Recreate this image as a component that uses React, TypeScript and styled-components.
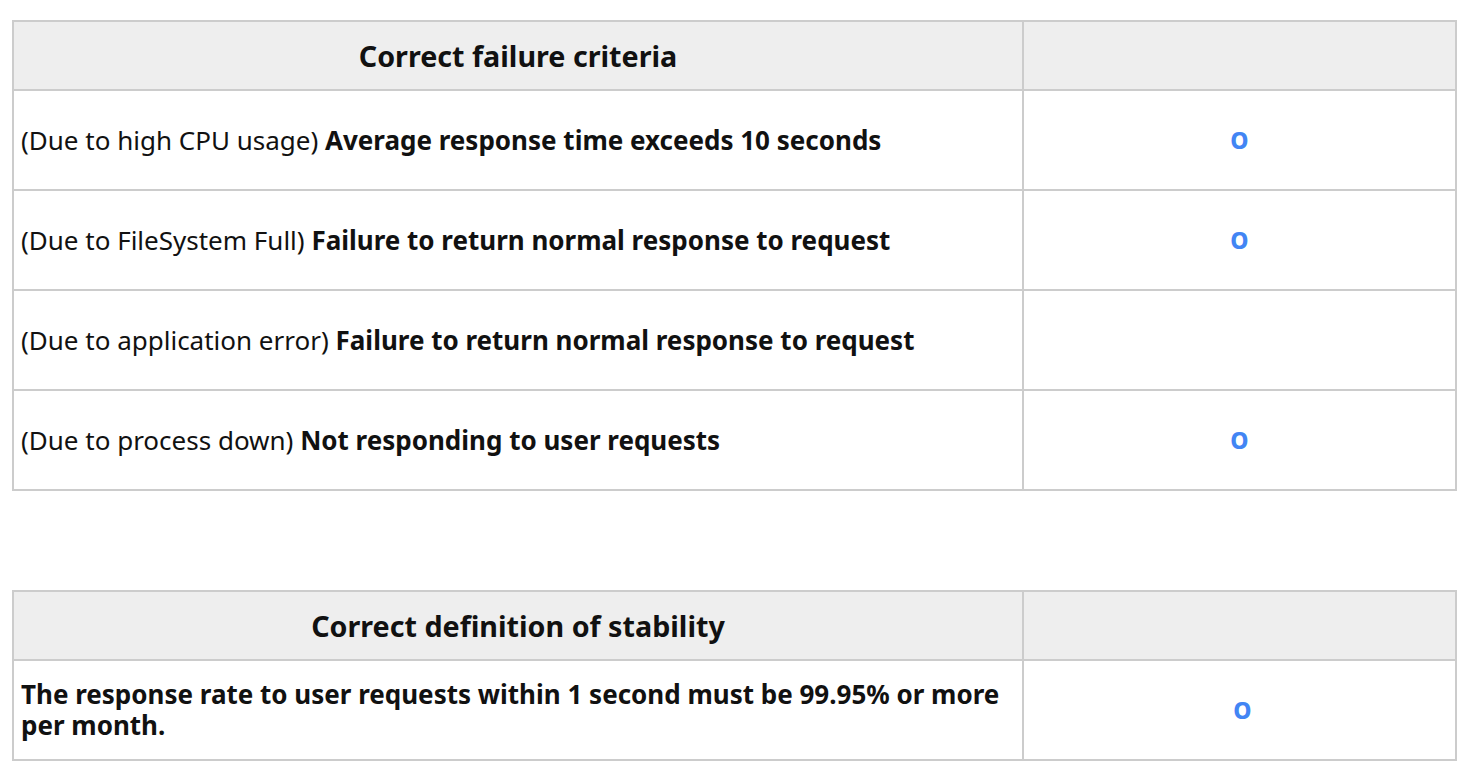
import React from "react";
import styled, { createGlobalStyle } from "styled-components";

const GlobalStyle = createGlobalStyle`
  html, body {
    margin: 0;
    padding: 0;
    background: #ffffff;
  }
  body {
    font-family: "Noto Sans", "Open Sans", sans-serif;
    color: #111111;
  }
`;

const Page = styled.div`
  display: flex;
  flex-direction: column;
  gap: 99px;
  padding: 20px 11px 0 12px;
  width: 1445px;
`;

const Table = styled.div`
  display: grid;
  grid-template-columns: 1010px 433px;
  width: 1445px;
  box-sizing: border-box;
  border-left: 2px solid #cccccc;
  border-top: 2px solid #cccccc;
`;

const Cell = styled.div<{ $head?: boolean; $center?: boolean }>`
  box-sizing: border-box;
  display: flex;
  align-items: center;
  justify-content: ${(p) => (p.$center || p.$head ? "center" : "flex-start")};
  height: ${(p) => (p.$head ? "69px" : "100px")};
  padding: 0 7px;
  border-right: 2px solid #cccccc;
  border-bottom: 2px solid #cccccc;
  background: ${(p) => (p.$head ? "#eeeeee" : "#ffffff")};
  font-size: ${(p) => (p.$head ? 28.7 : 26)}px;
  line-height: 31px;
  font-weight: ${(p) => (p.$head ? 700 : 400)};
  color: #111111;
`;

const Strong = styled.strong`
  font-weight: 700;
`;

const Mark = styled.span<{ $shift?: number }>`
  font-family: "Noto Sans", sans-serif;
  font-weight: 800;
  font-size: 23px;
  color: #4285f4;
  padding-left: ${(p) => p.$shift ?? 0}px;
`;

const criteria = [
  { cause: "(Due to high CPU usage)", text: "Average response time exceeds 10 seconds", ok: true },
  { cause: "(Due to FileSystem Full)", text: "Failure to return normal response to request", ok: true },
  { cause: "(Due to application error)", text: "Failure to return normal response to request", ok: false },
  { cause: "(Due to process down)", text: "Not responding to user requests", ok: true },
];

export default function App() {
  return (
    <>
      <GlobalStyle />
      <Page>
        <Table>
          <Cell $head>Correct failure criteria</Cell>
          <Cell $head />
          {criteria.map((c, i) => (
            <React.Fragment key={i}>
              <Cell>
                <span>
                  {c.cause} <Strong>{c.text}</Strong>
                </span>
              </Cell>
              <Cell $center>{c.ok ? <Mark>O</Mark> : null}</Cell>
            </React.Fragment>
          ))}
        </Table>
        <Table>
          <Cell $head>Correct definition of stability</Cell>
          <Cell $head />
          <Cell>
            <Strong>
              The response rate to user requests within 1 second must be 99.95% or more per month.
            </Strong>
          </Cell>
          <Cell $center>
            <Mark $shift={6}>O</Mark>
          </Cell>
        </Table>
      </Page>
    </>
  );
}
